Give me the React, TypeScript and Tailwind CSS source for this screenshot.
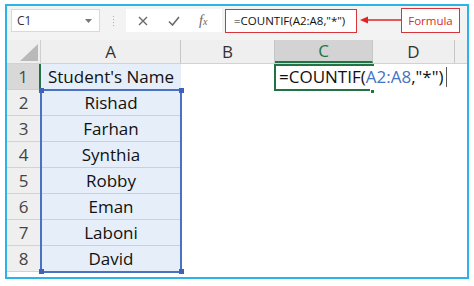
import React from 'react';

const names = ["Student's Name", 'Rishad', 'Farhan', 'Synthia', 'Robby', 'Eman', 'Laboni', 'David'];

const Corner = () => (
  <svg width="34" height="24" viewBox="0 0 34 24">
    <polygon points="31,4 31,21 13,21" fill="#b9b9b9" />
  </svg>
);

export default function App() {
  return (
    <div className="w-[474px] h-[286px] bg-white pt-[4px] pl-[5px] font-['Open_Sans',sans-serif]">
      <div className="w-[464px] h-[275px] border-2 border-[#2bb4e6] bg-[#f3f3f3] flex flex-col overflow-hidden">
        {/* formula bar */}
        <div className="h-[34px] shrink-0 flex items-start pt-[3px] pl-[4px]">
          <div className="w-[89px] h-[23px] bg-white border border-[#d9d9d9] flex items-center justify-between pl-[5px] pr-[7px] text-[12px] text-[#333]">
            <span>C1</span>
            <svg width="7" height="4" viewBox="0 0 7 4">
              <polygon points="0,0 7,0 3.5,4" fill="#777" />
            </svg>
          </div>
          <div className="w-[26px] h-[23px] flex flex-col items-center justify-center gap-[2px]">
            <span className="w-[1px] h-[1px] bg-[#aaa]" />
            <span className="w-[1px] h-[1px] bg-[#aaa]" />
            <span className="w-[1px] h-[1px] bg-[#aaa]" />
            <span className="w-[1px] h-[1px] bg-[#aaa]" />
          </div>
          <div className="w-[96px] h-[23px] bg-white flex items-center text-[#6a6a6a]">
            <svg className="ml-[12px]" width="10" height="10" viewBox="0 0 10 10">
              <path d="M1 1L9 9M9 1L1 9" stroke="#6a6a6a" strokeWidth="1.4" />
            </svg>
            <svg className="ml-[20px]" width="12" height="10" viewBox="0 0 12 10">
              <path d="M1 5.5L4.5 9L11 1" stroke="#6a6a6a" strokeWidth="1.6" fill="none" />
            </svg>
            <span className="ml-[19px] text-[14px] italic font-['Liberation_Serif',serif] text-[#666] leading-none">
              f<span className="text-[10px]">x</span>
            </span>
          </div>
          <div className="ml-[3px] w-[132px] h-[24px] bg-white border-[1.5px] border-[#d8343c] flex items-center pl-[8px] text-[11.5px] text-[#111] whitespace-nowrap">
            =COUNTIF(A2:A8,"*")
          </div>
          <svg className="mt-[5px]" width="44" height="12" viewBox="0 0 44 12">
            <path d="M10 6H44" stroke="#e02424" strokeWidth="1.3" />
            <polygon points="3,6 11,2.5 11,9.5" fill="#e02424" />
          </svg>
          <div className="w-[59px] h-[25px] -mt-[1px] bg-white border-[1.5px] border-[#d8343c] flex items-center justify-center text-[11.5px] text-[#d42a2a]">
            Formula
          </div>
        </div>

        {/* sheet */}
        <div className="relative flex-1 bg-white">
          <div className="h-[24px] flex bg-[#efefef] border-b border-[#d2d2d2] text-[17px] text-[#333] leading-none">
            <div className="w-[34px] border-r border-[#cfcfcf]">
              <Corner />
            </div>
            <div className="w-[140px] border-r border-[#c6c6c6] flex items-center justify-center">A</div>
            <div className="w-[94px] border-r border-[#c6c6c6] flex items-center justify-center">B</div>
            <div className="w-[98px] bg-[#d3d3d3] border-r border-[#c6c6c6] border-b-2 border-b-[#217346] flex items-center justify-center text-[#217346]">C</div>
            <div className="w-[82px] border-r border-[#c6c6c6] flex items-center justify-center">D</div>
            <div className="flex-1" />
          </div>

          {names.map((n, i) => (
            <div key={n} className="h-[26px] flex text-[17px] text-[#111]">
              <div
                className={
                  i === 0
                    ? 'w-[34px] bg-[#d8d8d8] border-b border-[#cfcfcf] border-r-2 border-r-[#217346] flex items-center justify-center text-[#3d5346]'
                    : 'w-[34px] bg-[#efefef] border-b border-r border-[#d3d3d3] flex items-center justify-center text-[#444]'
                }
              >
                {i + 1}
              </div>
              <div className="w-[140px] bg-[#e6eef9] border-b border-[#cdd1d6] flex items-center justify-center whitespace-nowrap">
                {n}
              </div>
              <div className="w-[94px]" />
              <div className="w-[98px] relative">
                {i === 0 && (
                  <span className="absolute left-[4px] top-0 h-[26px] flex items-center whitespace-nowrap text-[17px] text-[#111]">
                    =COUNTIF(<span className="text-[#4472c4]">A2:A8</span>,"*")
                    <span className="ml-[3px] w-[1px] h-[20px] bg-[#555]" />
                  </span>
                )}
              </div>
              <div className="flex-1" />
            </div>
          ))}

          {/* active cell C1 */}
          <div className="absolute left-[267px] top-[24px] w-[100px] h-[27px] border-2 border-r-0 border-[#217346] pointer-events-none" />
          <div className="absolute left-[363px] top-[49px] w-[5px] h-[5px] bg-[#217346] border border-white" />

          {/* range A2:A8 */}
          <div className="absolute left-[33px] top-[49px] w-[142px] h-[184px] border-2 border-[#4a72c2] pointer-events-none" />
          <div className="absolute left-[32px] top-[48px] w-[5px] h-[5px] bg-[#3d62b8]" />
          <div className="absolute left-[172px] top-[48px] w-[5px] h-[5px] bg-[#3d62b8]" />
          <div className="absolute left-[32px] top-[229px] w-[5px] h-[5px] bg-[#3d62b8]" />
          <div className="absolute left-[172px] top-[229px] w-[5px] h-[5px] bg-[#3d62b8]" />
        </div>
      </div>
    </div>
  );
}
